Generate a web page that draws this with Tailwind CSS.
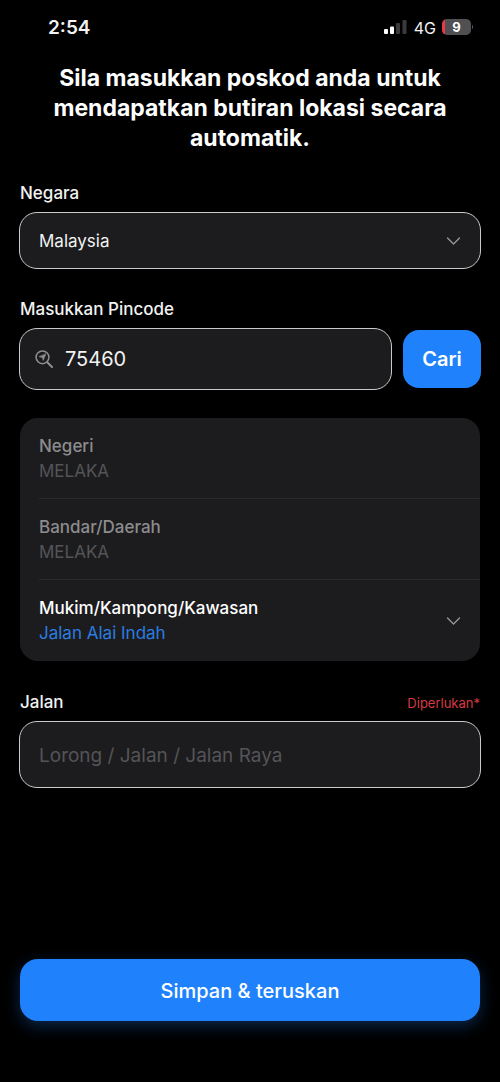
<!DOCTYPE html>
<html lang="ms">
<head>
<meta charset="utf-8">
<meta name="viewport" content="width=device-width, initial-scale=1">
<title>Lokasi</title>
<script src="https://cdn.jsdelivr.net/npm/@tailwindcss/browser@4"></script>
</head>
<body class="bg-black text-[#f2f2f2] font-['Inter',sans-serif]">
<div class="flex min-h-screen flex-col">
  <header class="flex h-[54px] items-center justify-between pr-[27px] pl-12">
    <time class="pt-px text-[19px] leading-6 font-semibold">2:54</time>
    <div class="flex items-center gap-[6px]">
      <svg class="h-4 w-6" viewBox="0 0 24 16" aria-label="Isyarat">
        <rect x="0" y="10" width="4" height="5" rx="1" fill="#fff"/>
        <rect x="6" y="7.500" width="4" height="7.500" rx="1" fill="#fff"/>
        <rect x="12" y="4" width="4" height="11" rx="1" fill="#3a3a3a"/>
        <rect x="18.500" y="1" width="4" height="14" rx="1" fill="#3a3a3a"/>
      </svg>
      <span class="pt-px text-base leading-5">4G</span>
      <div class="flex items-center gap-px">
        <div class="flex h-4 w-[29px] items-center justify-center rounded-[5px] bg-linear-to-r from-[#e8384a] from-10% to-[#505052] to-10% text-[13px] leading-4 font-bold text-white">9</div>
        <div class="h-1 w-px rounded-r bg-[#505052]"></div>
      </div>
    </div>
  </header>

  <form class="flex flex-1 flex-col px-[19px] pb-[61px]" onsubmit="return false">
    <h1 class="mt-[9px] px-6 text-center text-[23px] leading-[30px] font-bold text-white">Sila masukkan poskod anda untuk mendapatkan butiran lokasi secara automatik.</h1>

    <div class="mt-7 flex flex-col gap-[7px]">
      <label for="negara" class="px-px text-[17px] leading-6 font-medium">Negara</label>
      <div class="relative">
        <select id="negara" class="h-[57px] w-full appearance-none rounded-[18px] border border-[#cacaca] bg-[#1c1c1e] px-[19px] pt-[2px] text-[17px] outline-none">
          <option>Malaysia</option>
        </select>
        <svg class="pointer-events-none absolute top-1/2 right-5 h-4 w-4 -translate-y-1/2" viewBox="0 0 16 16" fill="none" stroke="#99999c" stroke-width="1.300" stroke-linecap="round" stroke-linejoin="round"><path d="M2.500 5 8.500 11 14.500 5"/></svg>
      </div>
    </div>

    <div class="mt-7 flex flex-col gap-[7px]">
      <label for="pincode" class="px-px text-[17px] leading-6 font-medium">Masukkan Pincode</label>
      <div class="flex items-center gap-[11px]">
        <div class="flex h-[62px] min-w-0 flex-1 items-center gap-3 rounded-[18px] border border-[#cacaca] bg-[#1c1c1e] px-[15px]">
          <svg class="h-[18px] w-[18px] shrink-0" viewBox="0 0 18 18" fill="none" stroke="#8e8e93" stroke-linecap="round">
            <circle cx="7.500" cy="7.300" r="6.400" stroke-width="1.500"/>
            <path d="M12.300 12.200 17 17" stroke-width="2"/>
            <path d="M10.800 4 8.200 10.400 7.400 7.500 4.300 6.800Z" fill="#8e8e93" stroke-width=".6" stroke-linejoin="round"/>
          </svg>
          <input id="pincode" type="text" inputmode="numeric" value="75460" class="w-full min-w-0 bg-transparent text-xl outline-none">
        </div>
        <button type="button" class="h-[58px] w-[78px] rounded-[16px] bg-[#1f82fc] text-xl font-semibold text-white">Cari</button>
      </div>
    </div>

    <div class="mx-px mt-7 flex flex-col rounded-[18px] bg-[#1c1c1e] pl-[19px] text-[17px] leading-[25px]">
      <div class="flex h-[81px] flex-col justify-center border-b border-[#2b2b2d] pt-px">
        <label for="negeri" class="font-medium text-[#8c8c8e]">Negeri</label>
        <input id="negeri" type="text" value="MELAKA" disabled class="h-[25px] w-full bg-transparent text-[#545458]">
      </div>
      <div class="flex h-[81px] flex-col justify-center border-b border-[#2b2b2d] pt-px">
        <label for="daerah" class="font-medium text-[#8c8c8e]">Bandar/Daerah</label>
        <input id="daerah" type="text" value="MELAKA" disabled class="h-[25px] w-full bg-transparent text-[#545458]">
      </div>
      <div class="relative flex h-[81px] flex-col justify-center pt-px">
        <label for="kawasan" class="font-medium text-white">Mukim/Kampong/Kawasan</label>
        <select id="kawasan" class="h-[25px] w-full appearance-none bg-transparent text-[#2a7de1] outline-none">
          <option>Jalan Alai Indah</option>
        </select>
        <svg class="pointer-events-none absolute top-1/2 right-[19px] h-4 w-4 -translate-y-1/2" viewBox="0 0 16 16" fill="none" stroke="#99999c" stroke-width="1.300" stroke-linecap="round" stroke-linejoin="round"><path d="M2.500 5 8.500 11 14.500 5"/></svg>
      </div>
    </div>

    <div class="mt-[29px] flex flex-col gap-[7px]">
      <div class="flex items-center justify-between px-px">
        <label for="jalan" class="text-[17px] leading-6 font-medium">Jalan</label>
        <span class="pt-[2px] text-[13px] leading-5 text-[#d73a42]">Diperlukan*</span>
      </div>
      <input id="jalan" type="text" placeholder="Lorong / Jalan / Jalan Raya" class="h-[67px] w-full rounded-[18px] border border-[#cacaca] bg-[#1c1c1e] px-[19px] pt-px text-[19px] outline-none placeholder:text-[#545458]">
    </div>

    <button type="submit" class="mx-px mt-auto h-[62px] rounded-[18px] bg-[#1f82fc] pt-px text-xl font-medium text-white shadow-[0_5px_16px_rgba(31,130,252,0.3)]">Simpan &amp; teruskan</button>
  </form>
</div>
</body>
</html>
